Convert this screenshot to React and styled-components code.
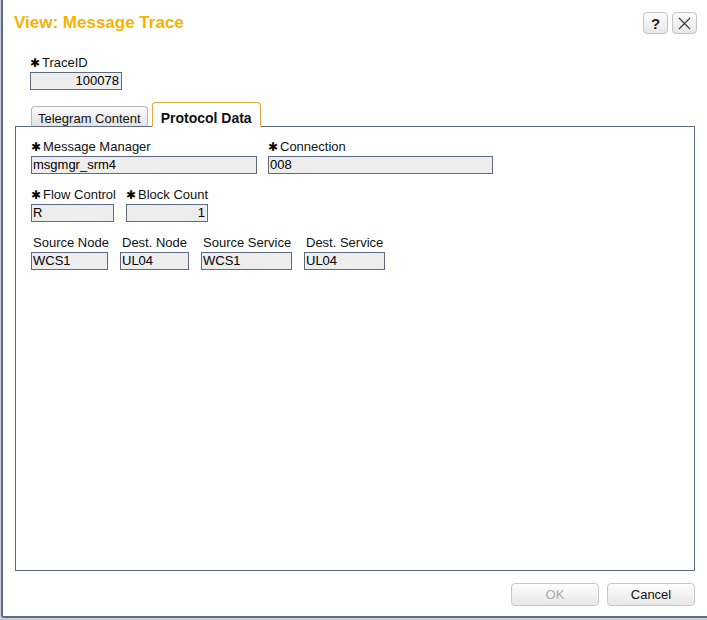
import React from "react";
import styled, { createGlobalStyle } from "styled-components";

const GlobalStyle = createGlobalStyle`
	html, body {
		margin: 0;
		padding: 0;
		overflow: hidden;
		background: #c9ced8;
	}
	body {
		font-family: "Liberation Sans", Arial, sans-serif;
	}
`;

const Dialog = styled.div`
	margin-left: 1px;
	height: 616px;
	box-sizing: content-box;
	background: #ffffff;
	border-left: 2px solid #5e6a80;
	border-bottom: 2px solid #5e6a80;
	border-bottom-left-radius: 3px;
	padding: 0 12px;
	display: flex;
	flex-direction: column;
`;

const Header = styled.div`
	margin-top: 12px;
	height: 22px;
	display: flex;
	align-items: center;
	justify-content: space-between;
`;

const Title = styled.div`
	font-size: 17px;
	line-height: 20px;
	font-weight: bold;
	color: #f5b400;
	margin-left: -1px;
`;

const HeaderButtons = styled.div`
	display: flex;
	gap: 4px;
	margin-right: -2px;
`;

const IconButton = styled.button`
	width: 25px;
	height: 22px;
	padding: 0;
	border: 1px solid #c4c4c4;
	border-radius: 4px;
	background: linear-gradient(#fdfdfd, #e6e6e6);
	display: flex;
	align-items: center;
	justify-content: center;
	color: #222;
	font-family: "Liberation Sans", Arial, sans-serif;
	font-size: 15px;
	font-weight: bold;
`;

const TraceSection = styled.div`
	margin-top: 21px;
	padding-left: 15px;
`;

const Field = styled.div`
	display: flex;
	flex-direction: column;
	width: ${(p) => p.$width}px;
`;

const Label = styled.div`
	height: 15px;
	font-size: 13px;
	line-height: 15px;
	color: #111;
	margin-bottom: 2px;
	padding-left: ${(p) => (p.$plain ? 2 : 0)}px;
	white-space: nowrap;
	display: flex;
	align-items: center;
`;

const Star = styled.span`
	font-family: "DejaVu Sans", sans-serif;
	font-size: 12px;
	line-height: 12px;
	width: 12px;
	flex-shrink: 0;
	color: #000;
`;

const Input = styled.div`
	box-sizing: border-box;
	height: 18px;
	border: 1px solid #5e6a80;
	background: #ededed;
	font-size: 13px;
	line-height: 16px;
	padding: 0 2px 0 1px;
	color: #000;
	text-align: ${(p) => (p.$right ? "right" : "left")};
	white-space: nowrap;
	overflow: hidden;
`;

const Tabs = styled.div`
	margin-top: 12px;
	margin-left: 16px;
	display: flex;
	align-items: flex-end;
	gap: 4px;
	position: relative;
	z-index: 1;
	margin-bottom: -1px;
`;

const Tab = styled.div`
	box-sizing: border-box;
	height: ${(p) => (p.$active ? 25 : 21)}px;
	padding: ${(p) => (p.$active ? "7px 8px 0" : "4px 6px 0")};
	border: 1px solid ${(p) => (p.$active ? "#e8a640" : "#b8b8b8")};
	border-bottom: 1px solid ${(p) => (p.$active ? "#ffffff" : "#5e6a80")};
	border-radius: 4px 4px 0 0;
	background: ${(p) => (p.$active ? "#ffffff" : "linear-gradient(#fbfbfb, #e2e2e2)")};
	font-size: ${(p) => (p.$active ? 14 : 13)}px;
	font-weight: ${(p) => (p.$active ? "bold" : "normal")};
	line-height: ${(p) => (p.$active ? 16 : 15)}px;
	color: #111;
	white-space: nowrap;
`;

const Panel = styled.div`
	height: 445px;
	box-sizing: border-box;
	border: 1px solid #5e6a80;
	padding: 12px 15px 0;
	display: flex;
	flex-direction: column;
	gap: 13px;
`;

const Row = styled.div`
	display: flex;
	gap: ${(p) => p.$gap || 12}px;
`;

const Footer = styled.div`
	margin-top: 12px;
	display: flex;
	justify-content: flex-end;
	gap: 8px;
`;

const Button = styled.button`
	width: 88px;
	height: 23px;
	border: 1px solid #c6c6c6;
	border-radius: 4px;
	background: linear-gradient(#fdfdfd, #e8e8e8);
	font-family: "Liberation Sans", Arial, sans-serif;
	font-size: 13px;
	color: ${(p) => (p.disabled ? "#a8a8a8" : "#111")};
	padding: 0;
`;

const FieldItem = ({ label, value, width, required, right, plain }) => (
	<Field $width={width}>
		<Label $plain={plain}>
			{required && <Star>✱</Star>}
			{label}
		</Label>
		<Input $right={right}>{value}</Input>
	</Field>
);

export default function App() {
	return (
		<>
			<GlobalStyle />
			<Dialog>
				<Header>
					<Title>View: Message Trace</Title>
					<HeaderButtons>
						<IconButton>?</IconButton>
						<IconButton>
							<svg width="13" height="13" viewBox="0 0 13 13">
								<path d="M1 1 L12 12 M12 1 L1 12" stroke="#333" strokeWidth="1.1" />
							</svg>
						</IconButton>
					</HeaderButtons>
				</Header>

				<TraceSection>
					<FieldItem label="TraceID" value="100078" width={92} required right />
				</TraceSection>

				<Tabs>
					<Tab>Telegram Content</Tab>
					<Tab $active>Protocol Data</Tab>
				</Tabs>

				<Panel>
					<Row $gap={11}>
						<FieldItem label="Message Manager" value="msgmgr_srm4" width={226} required />
						<FieldItem label="Connection" value="008" width={225} required />
					</Row>
					<Row $gap={12}>
						<FieldItem label="Flow Control" value="R" width={83} required />
						<FieldItem label="Block Count" value="1" width={82} required right />
					</Row>
					<Row $gap={12}>
						<FieldItem label="Source Node" value="WCS1" width={77} plain />
						<FieldItem label="Dest. Node" value="UL04" width={69} plain />
						<FieldItem label="Source Service" value="WCS1" width={91} plain />
						<FieldItem label="Dest. Service" value="UL04" width={81} plain />
					</Row>
				</Panel>

				<Footer>
					<Button disabled>OK</Button>
					<Button>Cancel</Button>
				</Footer>
			</Dialog>
		</>
	);
}
